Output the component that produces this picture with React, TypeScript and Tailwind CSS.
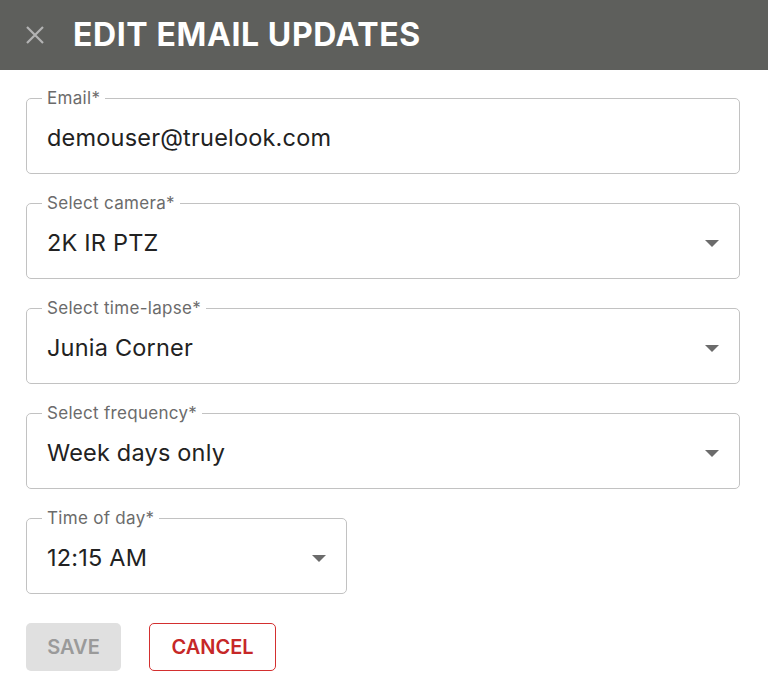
import React from "react";

function Arrow() {
  return (
    <svg width="14" height="7" viewBox="0 0 14 7" className="shrink-0">
      <polygon points="0,0 14,0 7,7" fill="#6b6b6b" />
    </svg>
  );
}

function Field({ label, value, select, width }: { label: string; value: string; select?: boolean; width?: string }) {
  return (
    <fieldset className={`m-0 min-w-0 border border-[#c2c2c2] rounded-[5px] h-[84px] px-[20px] ${width ?? "w-full"}`}>
      <legend className="ml-[-5px] px-[5px] text-[17px] leading-[16px] text-[#6b6b6b] tracking-[0.3px]">{label}</legend>
      <div className="h-[64px] flex items-center justify-between">
        <span className="text-[23.5px] text-[#222] tracking-[0.2px]">{value}</span>
        {select && <Arrow />}
      </div>
    </fieldset>
  );
}

export default function App() {
  return (
    <div className="w-[768px] h-[678px] bg-white font-['Inter',sans-serif] overflow-hidden">
      <header className="h-[70px] bg-[#5e5f5c] flex items-center pl-[25px]">
        <svg width="20" height="20" viewBox="0 0 20 20" className="shrink-0">
          <path d="M2 2 L18 18 M18 2 L2 18" stroke="#b3b3b3" strokeWidth="2.2" strokeLinecap="butt" />
        </svg>
        <h1 className="ml-[28px] text-[32px] font-bold text-white tracking-[0.6px]">EDIT EMAIL UPDATES</h1>
      </header>
      <div className="pl-[26px] pr-[28px] pt-[20px] flex flex-col gap-[21px]">
        <Field label="Email*" value="demouser@truelook.com" />
        <Field label="Select camera*" value="2K IR PTZ" select />
        <Field label="Select time-lapse*" value="Junia Corner" select />
        <Field label="Select frequency*" value="Week days only" select />
        <Field label="Time of day*" value="12:15 AM" select width="w-[321px]" />
        <div className="mt-[8px] flex gap-[28px]">
          <button className="w-[95px] h-[48px] rounded-[5px] bg-[#e0e0e0] text-[#9a9a9a] text-[20px] font-semibold">SAVE</button>
          <button className="w-[127px] h-[48px] rounded-[5px] border border-[#d32f2f] text-[#c62828] text-[20px] font-semibold">CANCEL</button>
        </div>
      </div>
    </div>
  );
}
